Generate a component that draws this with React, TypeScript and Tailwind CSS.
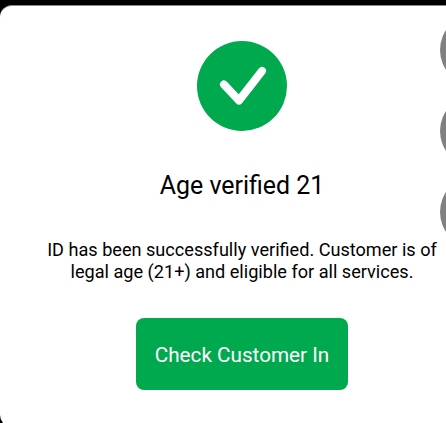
import React from 'react';

const SideDot = () => (
  <div className="w-[72px] h-[72px] rounded-full bg-[#808080] shrink-0" />
);

const App: React.FC = () => {
  return (
    <div className="relative w-[446px] h-[423px] bg-black overflow-hidden font-['Roboto',sans-serif]">
      <div className="mt-[5px] w-[484px] h-[422px] bg-white rounded-[12px] border-t border-[#8a8a8a] flex flex-col items-center pt-[35px]">
        <div className="w-[90px] h-[90px] rounded-full bg-[#00a94d] flex items-center justify-center">
          <svg width="90" height="90" viewBox="0 0 90 90" fill="none">
            <path
              d="M27 43.5 L42 59.5 L65 30"
              stroke="white"
              strokeWidth="8"
              strokeLinecap="round"
              strokeLinejoin="round"
            />
          </svg>
        </div>
        <h2 className="mt-[39px] text-[24.9px] leading-[32px] font-normal text-black">
          Age verified 21
        </h2>
        <p className="mt-[37px] w-[420px] text-center text-[18.12px] leading-[22px] text-black">
          ID has been successfully verified. Customer is of legal age (21+) and eligible for all services.
        </p>
        <button className="mt-[35px] w-[212px] h-[72px] pt-[3px] rounded-[8px] bg-[#00a94d] text-white text-[20.7px]">
          Check Customer In
        </button>
      </div>

      {/* clipped circles on the right edge */}
      <div className="absolute left-[440px] top-[14px] flex flex-col gap-[9px]">
        <SideDot />
        <SideDot />
        <SideDot />
      </div>
    </div>
  );
};

export default App;
